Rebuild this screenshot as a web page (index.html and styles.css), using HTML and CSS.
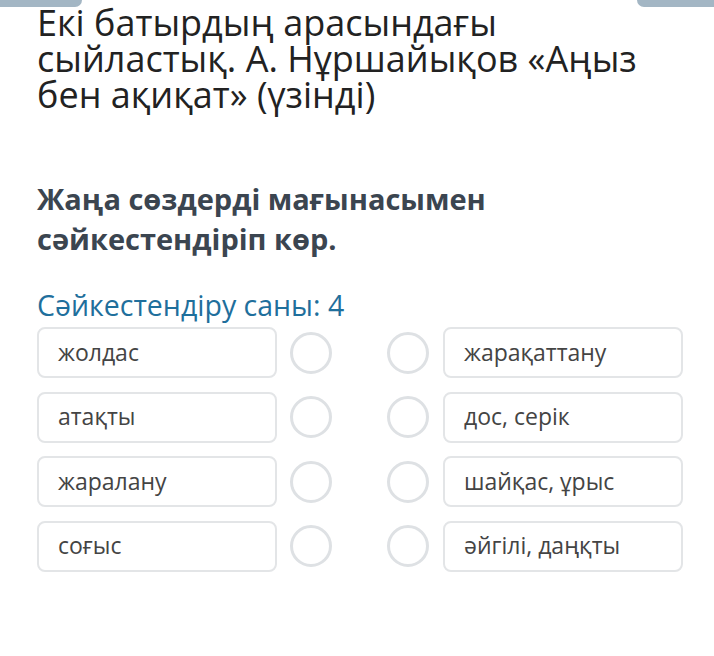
FILE: index.html
```html
<!DOCTYPE html>
<html lang="kk">

<head>
    <meta charset="UTF-8">
    <meta name="viewport" content="width=device-width, initial-scale=1.0">
    <title>Сәйкестендіру</title>
    <link rel="stylesheet" href="styles.css">
</head>

<body>
    <!-- жоғарғы батырмалардың шеттері -->
    <div class="top-bar">
        <span class="tab tab-left"></span>
        <span class="tab tab-right"></span>
    </div>

    <div class="container">
        <h1 class="title">Екі батырдың арасындағы сыйластық. А. Нұршайықов «Аңыз бен ақиқат» (үзінді)</h1>

        <h2 class="task">Жаңа сөздерді мағынасымен сәйкестендіріп көр.</h2>

        <p class="count">Сәйкестендіру саны: 4</p>

        <div class="pairs">
            <div class="pair">
                <div class="card">жолдас</div>
                <span class="dot"></span>
                <span class="dot dot-right"></span>
                <div class="card">жарақаттану</div>
            </div>
            <div class="pair">
                <div class="card">атақты</div>
                <span class="dot"></span>
                <span class="dot dot-right"></span>
                <div class="card">дос, серік</div>
            </div>
            <div class="pair">
                <div class="card">жаралану</div>
                <span class="dot"></span>
                <span class="dot dot-right"></span>
                <div class="card">шайқас, ұрыс</div>
            </div>
            <div class="pair">
                <div class="card">соғыс</div>
                <span class="dot"></span>
                <span class="dot dot-right"></span>
                <div class="card">әйгілі, даңқты</div>
            </div>
        </div>
    </div>
</body>

</html>
```

FILE: styles.css
```css
/* Жалпы стиль */
body {
    font-family: "Open Sans", "Noto Sans", sans-serif;
    background-color: #fff;
    margin: 0;
    padding: 0;
}

/* жоғарғы батырмалар */
.top-bar {
    display: flex;
    justify-content: space-between;
    height: 7px;
}

.tab {
    display: block;
    width: 82px;
    height: 7px;
    background-color: #a3b6c4;
}

.tab-left {
    border-bottom-right-radius: 8px;
}

.tab-right {
    width: 77px;
    border-bottom-left-radius: 8px;
}

/* негізгі контейнер */
.container {
    padding: 0 31px 0 37px;
}

.title {
    max-width: 612px;
    font-size: 36px;
    font-weight: 400;
    line-height: 36px;
    color: #222;
    margin: -2px 0 0 0;
}

.task {
    font-size: 29px;
    font-weight: 700;
    line-height: 40px;
    color: #3b4550;
    margin: 66px 0 0 0;
}

.count {
    font-size: 28.5px;
    line-height: 36px;
    color: #1f6f9c;
    margin: 28px 0 0 0;
}

/* жұптар */
.pairs {
    display: flex;
    flex-direction: column;
    gap: 13.5px;
    margin-top: 4px;
}

.pair {
    display: flex;
    align-items: center;
}

.card {
    box-sizing: border-box;
    width: 240px;
    height: 51px;
    border: 2px solid #e3e5e7;
    border-radius: 8px;
    padding: 0 0 2px 19px;
    display: flex;
    align-items: center;
    font-size: 23px;
    color: #444;
}

.dot {
    box-sizing: border-box;
    width: 42px;
    height: 42px;
    border: 3px solid #dee1e4;
    border-radius: 50%;
    margin-left: 13px;
}

.dot-right {
    margin-left: 55px;
    margin-right: 14px;
}
```
